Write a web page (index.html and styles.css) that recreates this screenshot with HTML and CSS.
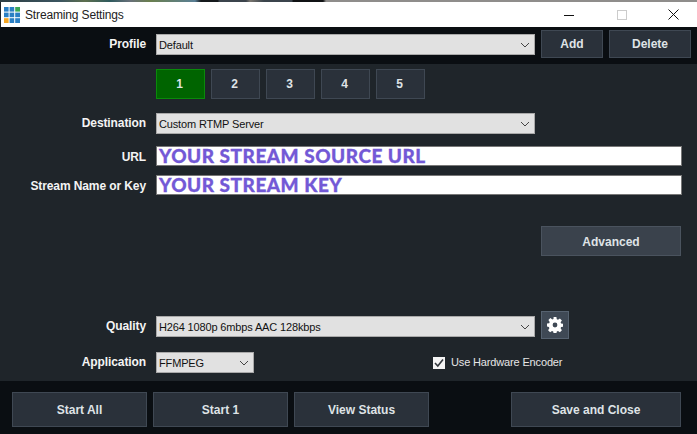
FILE: index.html
```html
<!DOCTYPE html>
<html lang="en">
<head>
<meta charset="utf-8">
<title>Streaming Settings</title>
<link rel="stylesheet" href="styles.css">
</head>
<body>
<div class="strip"></div>
<header class="titlebar">
  <svg class="logo" width="16" height="16" viewBox="0 0 16 16">
    <rect x="0" y="0" width="4.6" height="4.6" fill="#2a7fc4"/><rect x="5.6" y="0" width="4.6" height="4.6" fill="#2a7fc4"/><rect x="11.2" y="0" width="4.8" height="4.6" fill="#3aa655"/>
    <rect x="0" y="5.6" width="4.6" height="4.6" fill="#2a7fc4"/><rect x="5.6" y="5.6" width="4.6" height="4.6" fill="#2a7fc4"/><rect x="11.2" y="5.6" width="4.8" height="4.6" fill="#2a7fc4"/>
    <rect x="0" y="11.2" width="4.6" height="4.8" fill="#f5a623"/><rect x="5.6" y="11.2" width="4.6" height="4.8" fill="#2a7fc4"/><rect x="11.2" y="11.2" width="4.8" height="4.8" fill="#2a7fc4"/>
  </svg>
  <span class="title">Streaming Settings</span>
  <svg class="winctl min" width="10" height="10" viewBox="0 0 10 10"><path d="M0 5.5H10" stroke="#111" stroke-width="1"/></svg>
  <svg class="winctl max" width="10" height="10" viewBox="0 0 10 10"><rect x=".5" y=".5" width="9" height="9" fill="none" stroke="#ccc"/></svg>
  <svg class="winctl close" width="11" height="11" viewBox="0 0 11 11"><path d="M.5.5L10.5 10.5M10.5.5L.5 10.5" stroke="#111" stroke-width="1"/></svg>
</header>

<section class="band top">
  <label class="label">Profile</label>
  <div class="select wide"><span>Default</span><svg class="chev" width="10" height="6" viewBox="0 0 10 6"><path d="M1 1L5 5L9 1" fill="none" stroke="#444"/></svg></div>
  <button class="btn add">Add</button>
  <button class="btn del">Delete</button>
</section>

<main class="middle">
  <div class="tabs">
    <button class="btn tab active">1</button>
    <button class="btn tab">2</button>
    <button class="btn tab">3</button>
    <button class="btn tab">4</button>
    <button class="btn tab">5</button>
  </div>
  <div class="row dest">
    <label class="label raise">Destination</label>
    <div class="select wide"><span>Custom RTMP Server</span><svg class="chev" width="10" height="6" viewBox="0 0 10 6"><path d="M1 1L5 5L9 1" fill="none" stroke="#444"/></svg></div>
  </div>
  <div class="row url">
    <label class="label lower">URL</label>
    <div class="input">YOUR STREAM SOURCE URL</div>
  </div>
  <div class="row key">
    <label class="label lower">Stream Name or Key</label>
    <div class="input">YOUR STREAM KEY</div>
  </div>
  <div class="adv-row"><button class="btn advanced">Advanced</button></div>
  <div class="row quality">
    <label class="label lower">Quality</label>
    <div class="select wide"><span>H264 1080p 6mbps AAC 128kbps</span><svg class="chev" width="10" height="6" viewBox="0 0 10 6"><path d="M1 1L5 5L9 1" fill="none" stroke="#444"/></svg></div>
    <button class="btn gear">
      <svg width="16" height="16" viewBox="0 0 16 16"><path fill="#fff" fill-rule="evenodd" d="M6.6 0h2.8l.4 2.2 1.2.5 1.9-1.3 2 2-1.3 1.9.5 1.2 2.2.4v2.8l-2.2.4-.5 1.2 1.3 1.9-2 2-1.9-1.3-1.2.5-.4 2.2H6.6l-.4-2.2-1.2-.5-1.9 1.3-2-2 1.3-1.9-.5-1.2L0 9.4V6.6l2.2-.4.5-1.2-1.3-1.9 2-2 1.9 1.3 1.2-.5zM8 5.6a2.4 2.4 0 1 0 0 4.8 2.4 2.4 0 0 0 0-4.8z"/></svg>
    </button>
  </div>
  <div class="row app">
    <label class="label raise">Application</label>
    <div class="select narrow"><span>FFMPEG</span><svg class="chev" width="10" height="6" viewBox="0 0 10 6"><path d="M1 1L5 5L9 1" fill="none" stroke="#444"/></svg></div>
    <div class="check">
      <span class="box"><svg width="12" height="12" viewBox="0 0 12 12"><path d="M2 6L4.8 9L10 2.5" fill="none" stroke="#33383d" stroke-width="1.6"/></svg></span>
      <span class="raise">Use Hardware Encoder</span>
    </div>
  </div>
</main>

<footer class="band bottom">
  <button class="btn foot">Start All</button>
  <button class="btn foot">Start 1</button>
  <button class="btn foot">View Status</button>
  <button class="btn foot save">Save and Close</button>
</footer>
</body>
</html>
```

FILE: styles.css
```css
* { box-sizing: border-box; }
html, body { margin: 0; padding: 0; }
body {
  width: 697px;
  height: 434px;
  overflow: hidden;
  background: #1f252a;
  font-family: "Liberation Sans", Arial, sans-serif;
  font-size: 11px;
  color: #fff;
  display: flex;
  flex-direction: column;
}
.strip {
  height: 2px;
  background: linear-gradient(90deg, #2e3f45 0, #3b5560 60px, #5d6f4e 85px, #2f5a5e 110px, #68707a 130px, #6a7f4e 150px, #5a7f95 195px, #15191c 201px, #15191c 218px, #3b444c 219px, #3b444c 246px, #7a7670 250px, #3b444c 264px, #3b444c 292px, #101214 293px, #101214 323px, #8f8d8b 326px, #8f8d8b 697px);
}
.titlebar {
  height: 25px;
  margin-left: 1px;
  background: #fff;
  display: flex;
  align-items: center;
  padding-left: 3px;
  color: #222;
}
.logo { margin-right: 5px; }
.title { font-size: 12px; letter-spacing: -.15px; flex: 1; }
.winctl { flex: none; }
.min { margin-right: 43px; }
.max { margin-right: 41px; }
.close { margin-right: 18px; }

.band { background: #0a0e12; display: flex; }
.top { height: 37px; align-items: flex-start; padding-top: 3px; }
.label {
  width: 146px;
  text-align: right;
  font-weight: 700;
  font-size: 12px;
  letter-spacing: -.1px;
  flex: none;
  color: #f4f4f4;
}
.raise { padding-bottom: 2px; }
.lower { padding-top: 2px; }
.top .label { margin-top: 7px; }
.select {
  height: 21px;
  background: #e1e1e1;
  border: 1px solid #a9a9a9;
  color: #111;
  display: flex;
  align-items: center;
  justify-content: space-between;
  padding: 0 4px 0 2px;
  font-size: 11px;
  letter-spacing: -.15px;
  margin-left: 10px;
  flex: none;
}
.top .select { margin-top: 4px; }
.quality .select { margin-top: 3px; }
.wide { width: 379px; }
.narrow { width: 98px; }
.chev { flex: none; }
.btn {
  font-family: inherit;
  font-weight: 700;
  font-size: 12px;
  color: #dfe3e6;
  background: #2a313a;
  border: 1px solid #3f4853;
  padding: 0;
  display: flex;
  align-items: center;
  justify-content: center;
}
.add { width: 62px; height: 28px; margin-left: 6px; }
.del { width: 82px; height: 28px; margin-left: 6px; }

.middle { flex: 1; display: flex; flex-direction: column; padding-top: 5px; }
.tabs { display: flex; gap: 6px; margin-left: 156px; }
.tab { width: 49px; height: 30px; padding-right: 2px; }
.tab.active { background: #006400; border-color: #0a8a0a; }
.row { display: flex; align-items: center; }
.dest { margin-top: 14px; }
.url { margin-top: 12px; }
.key { margin-top: 9px; }
.input {
  width: 526px;
  height: 20px;
  margin-left: 10px;
  background: #fff;
  border: 1px solid #777;
  color: #7359d6;
  font-family: Lato, sans-serif;
  font-weight: 900;
  font-size: 19px;
  letter-spacing: .5px;
  -webkit-text-stroke: .3px #7359d6;
  line-height: 18px;
  padding-left: 2px;
  white-space: nowrap;
}
.adv-row { margin-top: 31px; margin-left: 541px; }
.advanced { width: 140px; height: 30px; padding-top: 2px; background: #3a424c; border-color: #4a535e; }
.quality { margin-top: 55px; }
.gear { width: 28px; height: 28px; margin-left: 6px; background: #3f4955; border-color: #566270; }
.app { margin-top: 13px; }
.check { display: flex; align-items: center; margin-left: 179px; color: #e6e6e6; font-size: 11px; letter-spacing: -.15px; }
.box { width: 12px; height: 12px; background: #f4f4f4; margin-right: 6px; display: flex; }

.bottom { height: 53px; padding: 11px 0 0 12px; gap: 6px; align-items: flex-start; }
.foot { width: 135px; height: 35px; }
.save { width: 170px; margin-left: 76px; }
```
